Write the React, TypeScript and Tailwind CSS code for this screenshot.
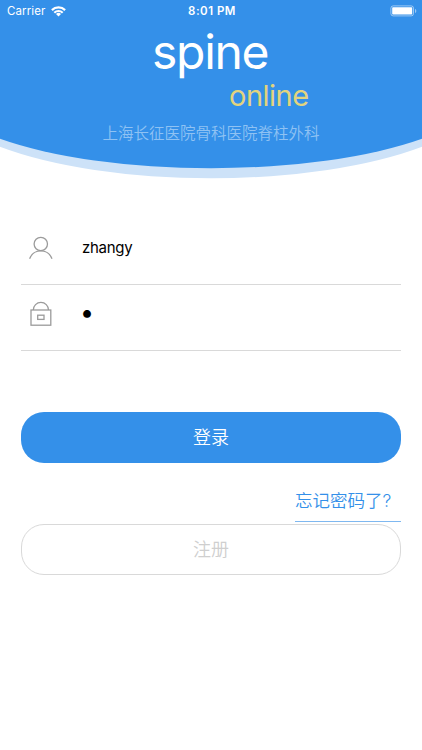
import { useState } from "react"

function StatusBar() {
  return (
    <div className="grid h-[22px] grid-cols-3 items-center pl-[7px] pr-[5px] pt-px text-[11.5px] leading-none text-white">
      <div className="flex items-center gap-[6px]">
        <span className="tracking-[0.1px]">Carrier</span>
        <svg width="15" height="11" viewBox="0 0 15 11" fill="none" stroke="currentColor" strokeWidth="2.2">
          <path d="M0.9 4.1a9.4 9.4 0 0 1 13.2 0" />
          <path d="M3.3 6.7a6 6 0 0 1 8.4 0" />
          <path d="M7.5 10.6 5 8.1a3.5 3.5 0 0 1 5 0z" fill="currentColor" stroke="none" />
        </svg>
      </div>
      <span className="text-center font-semibold tracking-[0.5px]">8:01 PM</span>
      <svg className="-mt-[2px] justify-self-end" width="27" height="12" viewBox="0 0 27 12" fill="none">
        <rect x="0.9" y="0.9" width="22.6" height="10" rx="2.3" stroke="white" strokeOpacity="0.5" />
        <rect x="2.2" y="2.3" width="20" height="7.2" rx="0.8" fill="white" />
        <path d="M25 4v4c.9-.4 1.3-1.2 1.3-2S25.900 4.400 25 4z" fill="white" fillOpacity="0.5" />
      </svg>
    </div>
  )
}

function Header() {
  return (
    <header className="relative h-[180px]">
      <svg className="absolute inset-0" width="422" height="180" viewBox="0 0 422 180">
        <path d="M0 0H422V146.800A275 87.700 0 0 1 0 146.800z" fill="#cde2f8" />
        <path d="M0 0H422V138.800A275 82 0 0 1 0 138.800z" fill="#3490e9" />
      </svg>
      <div className="relative flex flex-col">
        <StatusBar />
        <h1 className="mt-1 pl-[152px] text-[48px] leading-[52px] tracking-[-1.3px] text-white">spine</h1>
        <p className="pl-[229px] text-[29px] leading-9 tracking-[-0.5px] text-[#e2d47e]">online</p>
        <p className="mt-[8px] text-center text-[15.5px] leading-6 font-[350] text-[#8fc2f3]">上海长征医院骨科医院脊柱外科</p>
      </div>
    </header>
  )
}

function UserIcon() {
  return (
    <svg width="24" height="24" viewBox="0 0 24 24" fill="none" stroke="#9b9b9b" strokeWidth="1.3">
      <circle cx="11.8" cy="8" r="6.7" />
      <path d="M0.6 22.8a11.900 11.900 0 0 1 22.400 0" />
    </svg>
  )
}

function LockIcon() {
  return (
    <svg width="24" height="26" viewBox="0 0 24 26" fill="none" stroke="#9b9b9b" strokeWidth="1.3">
      <path d="M4.3 9a7.600 7.600 0 0 1 15.200 0" />
      <rect x="2" y="9" width="19.8" height="15.2" />
      <rect x="8.7" y="14.2" width="6.3" height="4.2" />
    </svg>
  )
}

export default function App() {
  const [username, setUsername] = useState("zhangy")
  const [password, setPassword] = useState("1")

  return (
    <main className="min-h-[750px] w-[422px] bg-white font-[Inter,'Noto_Sans_CJK_SC',sans-serif]">
      <Header />
      <form className="flex flex-col px-[21px] pt-[38px]" onSubmit={(e) => e.preventDefault()}>
        <label className="flex h-[67px] items-center border-b border-[#d9d9d9] pb-[6px] pl-2">
          <UserIcon />
          <input
            className="ml-[29px] w-[280px] text-[15px] leading-6 tracking-[-0.3px] text-black outline-none"
            value={username}
            onChange={(e) => setUsername(e.target.value)}
          />
        </label>
        <label className="flex h-[66px] items-center border-b border-[#d9d9d9] pb-[7px] pl-2">
          <LockIcon />
          <input
            type="password"
            className="-mt-[4px] ml-[27px] w-[280px] text-[25px] leading-6 text-black outline-none"
            value={password}
            onChange={(e) => setPassword(e.target.value)}
          />
        </label>
        <button className="mt-[60.5px] h-[51px] rounded-[23px] bg-[#3490e9] pt-px text-[18px] font-[350] text-white">登录</button>
        <a className="mt-[25px] flex h-[34px] w-[106px] self-end border-b border-[#7fb8f0] text-[17.5px] leading-[26px] font-[350] whitespace-nowrap text-[#3490e9]">
          忘记密码了?
        </a>
        <button type="button" className="mt-[2px] h-[51px] rounded-[23px] border border-[#d9d9d9] text-[18px] font-[350] text-[#cfcfcf]">
          注册
        </button>
      </form>
    </main>
  )
}
